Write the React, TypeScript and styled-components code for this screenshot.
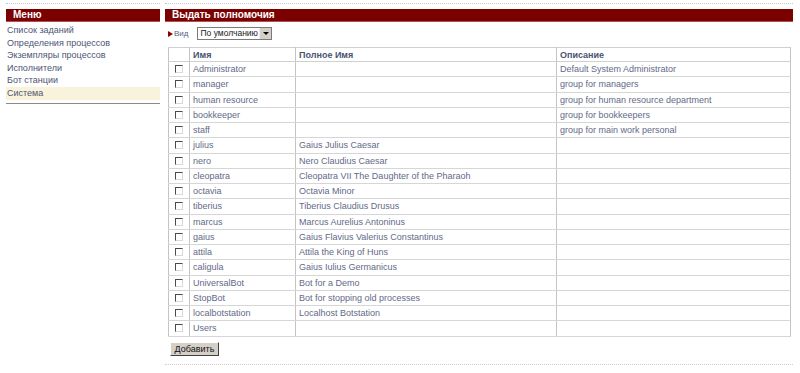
import styled, { createGlobalStyle } from "styled-components";

const GlobalStyle = createGlobalStyle`
  body {
    margin: 0;
    background: #ffffff;
    font-family: "Liberation Sans", Arial, sans-serif;
  }
`;

const Page = styled.div`
  display: flex;
  gap: 5px;
  padding: 3px 7px 0 6px;
  width: 800px;
  box-sizing: border-box;
`;

const Column = styled.div<{ $width: number }>`
  width: ${(p) => p.$width}px;
  flex-shrink: 0;
  border-top: 1px dotted #c8c8c8;
  padding-top: 5px;
`;

const Bar = styled.div`
  height: 12px;
  background: #7b0000;
  color: #ffffff;
  font-weight: bold;
  font-size: 10px;
  line-height: 12px;
  padding-left: 7px;
  border-bottom: 1px solid #b05050;
`;

const Menu = styled.ul`
  list-style: none;
  margin: 2px 0 0;
  padding: 0 0 3px;
  border-bottom: 1px solid #8a8a8a;
`;

const MenuItem = styled.li<{ $active?: boolean }>`
  height: 12.6px;
  line-height: 12.6px;
  font-size: 9px;
  color: #4e5574;
  padding-left: 1px;
  background: ${(p) => (p.$active ? "#faf3dc" : "transparent")};
`;

const ViewRow = styled.div`
  display: flex;
  align-items: center;
  height: 13px;
  margin: 5px 0 7px 3px;
  font-size: 8px;
  color: #5a6080;
  white-space: nowrap;
`;

const Triangle = styled.span`
  width: 0;
  height: 0;
  border-left: 5px solid #8b0000;
  border-top: 3px solid transparent;
  border-bottom: 3px solid transparent;
  margin-right: 1px;
`;

const Select = styled.div`
  display: flex;
  align-items: stretch;
  margin-left: 9px;
  width: 75px;
  height: 13px;
  box-sizing: border-box;
  border: 1px solid #7a7a7a;
  background: #fff;
  font-size: 8.5px;
  color: #222;
`;

const SelectText = styled.span`
  flex: 1;
  line-height: 11px;
  padding-left: 2px;
  white-space: nowrap;
`;

const SelectArrow = styled.span`
  width: 11px;
  flex-shrink: 0;
  background: #d4d0c8;
  border-left: 1px solid #eee;
  display: flex;
  align-items: center;
  justify-content: center;
  &::after {
    content: "";
    border-top: 3px solid #000;
    border-left: 3px solid transparent;
    border-right: 3px solid transparent;
  }
`;

const Table = styled.table`
  margin-left: 3px;
  width: 623px;
  border-collapse: collapse;
  border: 1px solid #b4b4b4;
  table-layout: fixed;
  font-size: 9px;
`;

const HeadCell = styled.th<{ $w?: number }>`
  width: ${(p) => (p.$w ? `${p.$w}px` : "auto")};
  height: 13px;
  padding: 0 0 0 3px;
  text-align: left;
  font-weight: bold;
  color: #4a5370;
  border: 1px solid #d0d0d0;
  border-left-color: #c4c4c4;
  border-right-color: #c4c4c4;
`;

const Row = styled.tr`
  height: 15.25px;
`;

const Cell = styled.td`
  padding: 0 0 0 3px;
  color: #636a88;
  border: 1px solid #d6d6d6;
  border-left-color: #c4c4c4;
  border-right-color: #c4c4c4;
  white-space: nowrap;
  overflow: hidden;
`;

const CheckCell = styled(Cell)`
  padding: 0 0 0 6px;
`;

const Check = styled.span`
  display: block;
  width: 8px;
  height: 8px;
  box-sizing: border-box;
  border: 1px solid;
  border-color: #4a4a4a #d8d8d8 #d8d8d8 #4a4a4a;
  background: #ffffff;
`;

const Button = styled.button`
  display: block;
  margin: 5px 0 0 5px;
  width: 49px;
  height: 14px;
  padding: 0;
  font-family: "Liberation Sans", Arial, sans-serif;
  font-size: 9px;
  line-height: 10px;
  color: #111;
  background: #d4d0c8;
  border: 1px solid;
  border-color: #ffffff #404040 #404040 #ffffff;
`;

const Footer = styled.div`
  margin-top: 8px;
  border-top: 1px dotted #d8c8c8;
`;

const menu = [
  "Список заданий",
  "Определения процессов",
  "Экземпляры процессов",
  "Исполнители",
  "Бот станции",
  "Система",
];

const rows: [string, string, string][] = [
  ["Administrator", "", "Default System Administrator"],
  ["manager", "", "group for managers"],
  ["human resource", "", "group for human resource department"],
  ["bookkeeper", "", "group for bookkeepers"],
  ["staff", "", "group for main work personal"],
  ["julius", "Gaius Julius Caesar", ""],
  ["nero", "Nero Claudius Caesar", ""],
  ["cleopatra", "Cleopatra VII The Daughter of the Pharaoh", ""],
  ["octavia", "Octavia Minor", ""],
  ["tiberius", "Tiberius Claudius Drusus", ""],
  ["marcus", "Marcus Aurelius Antoninus", ""],
  ["gaius", "Gaius Flavius Valerius Constantinus", ""],
  ["attila", "Attila the King of Huns", ""],
  ["caligula", "Gaius Iulius Germanicus", ""],
  ["UniversalBot", "Bot for a Demo", ""],
  ["StopBot", "Bot for stopping old processes", ""],
  ["localbotstation", "Localhost Botstation", ""],
  ["Users", "", ""],
];

export default function App() {
  return (
    <>
      <GlobalStyle />
      <Page>
        <Column $width={154}>
          <Bar>Меню</Bar>
          <Menu>
            {menu.map((m) => (
              <MenuItem key={m} $active={m === "Система"}>
                {m}
              </MenuItem>
            ))}
          </Menu>
        </Column>
        <Column $width={628}>
          <Bar>Выдать полномочия</Bar>
          <ViewRow>
            <Triangle />
            Вид
            <Select>
              <SelectText>По умолчанию</SelectText>
              <SelectArrow />
            </Select>
          </ViewRow>
          <Table>
            <thead>
              <tr>
                <HeadCell $w={17}></HeadCell>
                <HeadCell $w={102}>Имя</HeadCell>
                <HeadCell $w={257}>Полное Имя</HeadCell>
                <HeadCell>Описание</HeadCell>
              </tr>
            </thead>
            <tbody>
              {rows.map(([name, full, desc]) => (
                <Row key={name}>
                  <CheckCell>
                    <Check />
                  </CheckCell>
                  <Cell>{name}</Cell>
                  <Cell>{full}</Cell>
                  <Cell>{desc}</Cell>
                </Row>
              ))}
            </tbody>
          </Table>
          <Button>Добавить</Button>
          <Footer />
        </Column>
      </Page>
    </>
  );
}
